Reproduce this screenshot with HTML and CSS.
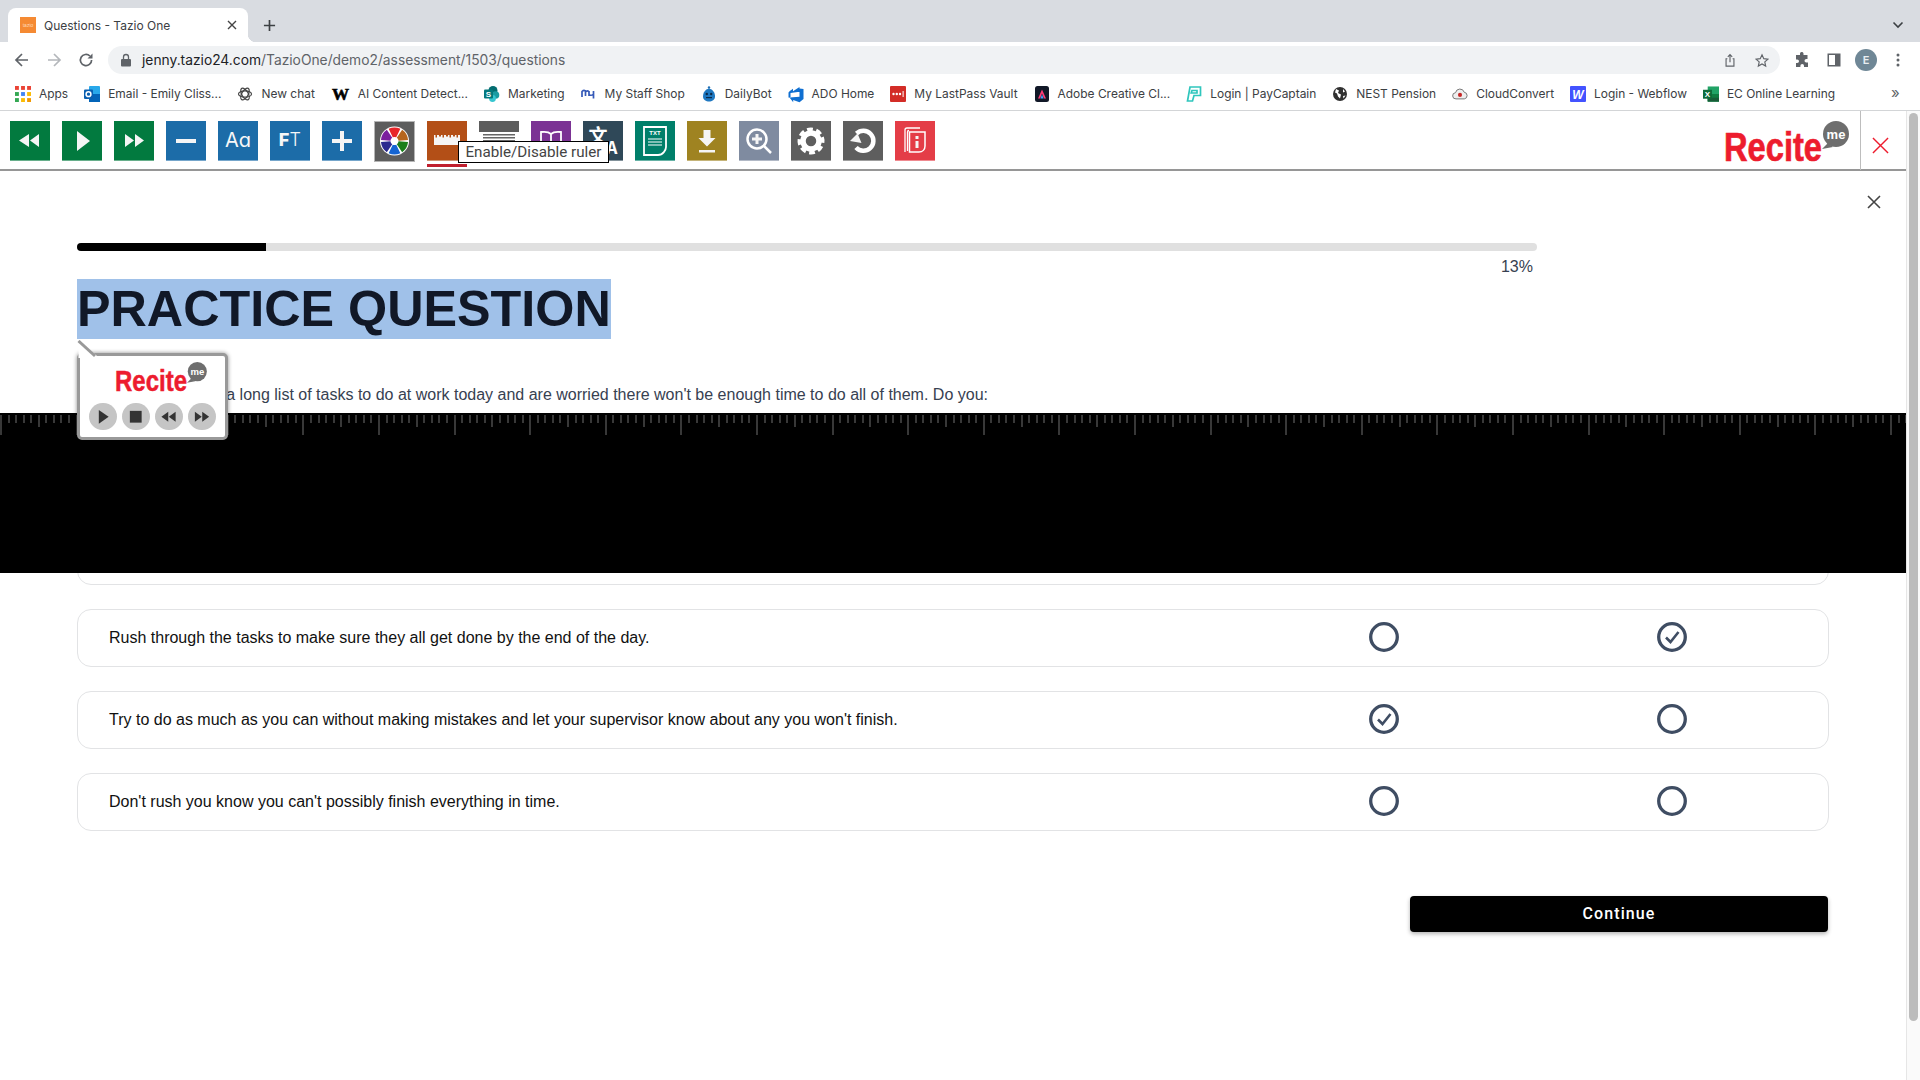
FILE: index.html
```html
<!DOCTYPE html>
<html lang="en">
<head>
<meta charset="utf-8">
<title>Questions - Tazio One</title>
<link rel="stylesheet" href="styles.css">
</head>
<body>
<div class="tabstrip">
  <div class="tab">
    <span class="favicon">tazio</span>
    <span class="tab-title">Questions - Tazio One</span>
    <svg class="tab-x" viewBox="0 0 10 10"><path d="M1 1l8 8M9 1l-8 8"/></svg>
  </div>
  <svg class="newtab" viewBox="0 0 14 14"><path d="M7 1v12M1 7h12"/></svg>
  <svg class="tab-chevron" viewBox="0 0 12 8"><path d="M1.5 1.5L6 6l4.5-4.5"/></svg>
</div>

<div class="navbar">
  <span class="nav-btn"><svg viewBox="0 0 16 16"><path class="ic" d="M14 8H2.5M8 2L2 8l6 6"/></svg></span>
  <span class="nav-btn dim"><svg viewBox="0 0 16 16"><path class="ic" d="M2 8h11.5M8 2l6 6-6 6"/></svg></span>
  <span class="nav-btn"><svg viewBox="0 0 16 16"><path class="ic" d="M13.6 8a5.6 5.6 0 1 1-1.7-4"/><path class="fillic" d="M14.5 1.5v5h-5z"/></svg></span>
  <div class="omnibox">
    <svg class="lock" viewBox="0 0 12 14"><path class="fillic" d="M2 6h8a1 1 0 0 1 1 1v5.500a1 1 0 0 1-1 1H2a1 1 0 0 1-1-1V7a1 1 0 0 1 1-1z"/><path class="ic thin" d="M3.500 6V4a2.500 2.500 0 0 1 5 0v2"/></svg>
    <span class="url"><b>jenny.tazio24.com</b>/TazioOne/demo2/assessment/1503/questions</span>
    <span class="nav-btn small"><svg viewBox="0 0 16 16"><path class="ic thin" d="M5 6H3.500v8.500h9V6H11M8 10V1.500M5.500 3.800L8 1.300l2.500 2.500"/></svg></span>
    <span class="nav-btn small"><svg viewBox="0 0 16 16"><path class="ic thin" d="M8 1.500l2 4.400 4.800.5-3.600 3.200 1 4.700L8 11.900l-4.200 2.400 1-4.700L1.200 6.400 6 5.900z"/></svg></span>
  </div>
  <span class="nav-btn gapped"><svg viewBox="0 0 16 16"><path class="fillic" d="M6 1.500a1.800 1.800 0 0 1 3.500 0V3h4v4h-1.200a1.800 1.800 0 0 0 0 3.600H14V15H10v-1.200a1.800 1.800 0 0 0-3.600 0V15H2v-4h1.200a1.800 1.800 0 0 0 0-3.600H2V3h4z"/></svg></span>
  <span class="nav-btn"><svg viewBox="0 0 16 16"><path class="fillic" d="M1.500 1.500h13v13h-13zM3 3v10h6V3z" fill-rule="evenodd"/></svg></span>
  <span class="nav-btn"><span class="avatar">E</span></span>
  <span class="nav-btn"><svg viewBox="0 0 16 16"><circle class="fillic" cx="8" cy="3" r="1.500"/><circle class="fillic" cx="8" cy="8" r="1.500"/><circle class="fillic" cx="8" cy="13" r="1.500"/></svg></span>
</div>

<div class="bookmarks">
  <span class="bm"><svg viewBox="0 0 14 14"><rect width="3.400" height="3.400" fill="#ea4335"/><rect x="5.300" width="3.400" height="3.400" fill="#ea4335"/><rect x="10.600" width="3.400" height="3.400" fill="#ea4335"/><rect y="5.300" width="3.400" height="3.400" fill="#34a853"/><rect x="5.300" y="5.300" width="3.400" height="3.400" fill="#4285f4"/><rect x="10.600" y="5.300" width="3.400" height="3.400" fill="#fbbc04"/><rect y="10.600" width="3.400" height="3.400" fill="#34a853"/><rect x="5.300" y="10.600" width="3.400" height="3.400" fill="#fbbc04"/><rect x="10.600" y="10.600" width="3.400" height="3.400" fill="#f29900"/></svg>Apps</span>
  <span class="bm"><svg viewBox="0 0 16 16"><rect x="5" y="0" width="11" height="16" rx="1" fill="#28a8ea"/><rect x="5" y="8" width="11" height="8" fill="#0364b8"/><rect y="3.500" width="9" height="9.500" rx="1" fill="#0a5fb0"/><circle cx="4.500" cy="8.200" r="2.400" fill="none" stroke="#fff" stroke-width="1.500"/></svg>Email - Emily Cliss...</span>
  <span class="bm"><svg viewBox="0 0 16 16"><g fill="none" stroke="#444" stroke-width="1.200"><ellipse cx="8" cy="8" rx="6.500" ry="3.200"/><ellipse cx="8" cy="8" rx="6.500" ry="3.200" transform="rotate(60 8 8)"/><ellipse cx="8" cy="8" rx="6.500" ry="3.200" transform="rotate(120 8 8)"/></g></svg>New chat</span>
  <span class="bm wide"><svg viewBox="0 0 20 16"><text class="bm-glyph serif" x="10" y="14" text-anchor="middle" font-size="18" fill="#000" stroke="#000" stroke-width=".6">W</text></svg>AI Content Detect...</span>
  <span class="bm"><svg viewBox="0 0 16 16"><circle cx="9" cy="4.500" r="4.500" fill="#036c70"/><circle cx="11.500" cy="9" r="3.800" fill="#1a9ba1"/><circle cx="8.500" cy="12.500" r="3.400" fill="#37c6d0"/><rect y="3.500" width="9" height="9" rx="1" fill="#03787c"/><text class="bm-glyph" x="4.500" y="11" text-anchor="middle" font-size="8" fill="#fff">S</text></svg>Marketing</span>
  <span class="bm"><svg viewBox="0 0 16 16"><path d="M1 11V5.500c1.500-1.500 3-1.500 3.500 0V10M4.500 6c1-1.500 3-1.500 3.500 0v4M8 5v3.500c1 1 3 1 4 0M12.500 5v7.500" fill="none" stroke="#3559b8" stroke-width="1.700"/></svg>My Staff Shop</span>
  <span class="bm"><svg viewBox="0 0 16 16"><circle cx="8" cy="1.500" r="1.200" fill="#1f6fb5"/><path d="M8 2.500c4 1 6 4 6 8 0 3.500-3 5-6 5s-6-1.500-6-5c0-4 2-7 6-8z" fill="#1f78c1"/><circle cx="5.800" cy="8" r="1.200" fill="#0b2a4a"/><circle cx="10.200" cy="8" r="1.200" fill="#0b2a4a"/><rect x="5" y="11" width="6" height="1.200" fill="#0b2a4a"/></svg>DailyBot</span>
  <span class="bm"><svg viewBox="0 0 16 16"><path d="M15.500 3v10l-4 3.300-6.300-2.300v2.300L1.500 11.500l10-.8V2.500l4 .5zM11.500 1L5 5.300V2.800L1.800 5 .5 6.500v5l2 .5V7l9-1.300z" fill="#0f6fd1"/></svg>ADO Home</span>
  <span class="bm"><svg viewBox="0 0 16 16"><rect width="16" height="16" rx="1" fill="#d32d27"/><circle cx="3.500" cy="8" r="1.200" fill="#fff"/><circle cx="6.800" cy="8" r="1.200" fill="#fff"/><circle cx="10" cy="8" r="1.200" fill="#fff"/><rect x="12.600" y="5" width="1" height="6" fill="#fff"/></svg>My LastPass Vault</span>
  <span class="bm"><svg viewBox="0 0 16 16"><rect x="1" width="14" height="16" rx="2.500" fill="#111827"/><path d="M8 3.500L4 12.500h2L8 7.500l2 5h2z" fill="#ff3d78"/><path d="M6.400 12.500L8 8.500l1.600 4z" fill="#45a6ff"/></svg>Adobe Creative Cl...</span>
  <span class="bm"><svg viewBox="0 0 16 16"><path d="M4 1h10.500v8.500H8L6.500 15H1.500zM6 4.500l-.8 2.500H11V4.500z" fill="none" stroke="#2fc6bd" stroke-width="1.700"/></svg>Login | PayCaptain</span>
  <span class="bm"><svg viewBox="0 0 16 16"><circle cx="8" cy="8" r="7" fill="#303030"/><path d="M4 3l3 1.500-1 2.500 3 1.500-1 4-2-2-1-3-2-1zM11 3l2 2.500-2 1zM11 10l2.500-.5-2 3z" fill="#fff"/></svg>NEST Pension</span>
  <span class="bm"><svg viewBox="0 0 18 16"><path d="M4.500 13.500a3.500 3.500 0 0 1-.5-7 5 5 0 0 1 9.700-.5 3.800 3.800 0 0 1 .2 7.500z" fill="#eee" stroke="#777" stroke-width="1.100"/><circle cx="9" cy="9" r="2.300" fill="#c62828"/></svg>CloudConvert</span>
  <span class="bm"><svg viewBox="0 0 16 16"><rect width="16" height="16" rx="1" fill="#4353ff"/><text class="bm-glyph ital" x="8" y="12.500" text-anchor="middle" font-size="12" fill="#fff">W</text></svg>Login - Webflow</span>
  <span class="bm"><svg viewBox="0 0 17 16"><rect x="5" width="12" height="16" fill="#21a366"/><rect x="5" y="8" width="12" height="8" fill="#107c41"/><rect x="5" y="12" width="12" height="4" fill="#185c37"/><rect y="3.500" width="9.500" height="9.500" fill="#0f6b3a"/><text class="bm-glyph" x="4.800" y="11.300" text-anchor="middle" font-size="8.500" fill="#fff">X</text></svg>EC Online Learning</span>
  <span class="bm-more">»</span>
</div>

<div class="viewport">
  <div class="page">
    <div class="recite-bar">
      <button class="rb green"><svg viewBox="0 0 40 40"><path d="M19 13l-10 6.500L19 26zM29 13l-9 6.500 9 6.500z"/></svg></button>
      <button class="rb green"><svg viewBox="0 0 40 40"><path d="M15 10l13 10-13 10z"/></svg></button>
      <button class="rb green"><svg viewBox="0 0 40 40"><path d="M11 13l9 6.500L11 26zM21 13l9 6.500-9 6.500z"/></svg></button>
      <button class="rb blue"><svg viewBox="0 0 40 40"><rect x="10" y="18" width="20" height="4"/></svg></button>
      <button class="rb blue rb-text"><span class="aa">Aa</span></button>
      <button class="rb blue rb-text"><span class="ft"><b>F</b><i>T</i></span></button>
      <button class="rb blue"><svg viewBox="0 0 40 40"><path d="M18 10h4v8h8v4h-8v8h-4v-8h-8v-4h8z"/></svg></button>
      <button class="rb palette"><svg viewBox="0 0 41 41"><circle cx="20.500" cy="20" r="14.500" fill="#fff"/><g fill="none" stroke-width="9.500"><circle cx="20.500" cy="20" r="8.800" pathLength="60" stroke-dasharray="8.500 51.500" stroke="#e8262a" transform="rotate(-115.500 20.500 20)"/><circle cx="20.500" cy="20" r="8.800" pathLength="60" stroke-dasharray="8.500 51.500" stroke="#b5651d" transform="rotate(-55.500 20.500 20)"/><circle cx="20.500" cy="20" r="8.800" pathLength="60" stroke-dasharray="8.500 51.500" stroke="#1a7f1a" transform="rotate(4.500 20.500 20)"/><circle cx="20.500" cy="20" r="8.800" pathLength="60" stroke-dasharray="8.500 51.500" stroke="#1464d2" transform="rotate(64.500 20.500 20)"/><circle cx="20.500" cy="20" r="8.800" pathLength="60" stroke-dasharray="8.500 51.500" stroke="#2c2a8f" transform="rotate(124.500 20.500 20)"/><circle cx="20.500" cy="20" r="8.800" pathLength="60" stroke-dasharray="8.500 51.500" stroke="#7b1f9e" transform="rotate(184.500 20.500 20)"/></g></svg></button>
      <button class="rb ruler-on"><svg viewBox="0 0 40 40"><path d="M7 14h1.500v2.500H10V14h2v1.500h2V14h1.500v2.500H17V14h2v1.500h2V14h1.500v2.500H24V14h2v1.500h2V14h1.500v2.500H31V14h2v10H7z"/></svg><span class="active-mark"></span></button>
      <button class="rb mask"><svg viewBox="0 0 40 40"><rect width="40" height="11" fill="#5d5d5d"/><rect x="4" y="13" width="32" height="1.500" fill="#666"/><rect x="4" y="16" width="32" height="1.500" fill="#666"/><rect x="4" y="19" width="32" height="1.500" fill="#666"/></svg></button>
      <button class="rb purple"><svg viewBox="0 0 40 40"><path d="M20 13c-2-2-6-2.500-10-2v17c4-.5 8 0 10 2 2-2 6-2.500 10-2V11c-4-.5-8 0-10 2zm0 0v17" fill="none" stroke="#fff" stroke-width="1.800"/></svg></button>
      <button class="rb navy"><svg viewBox="0 0 40 40"><text class="tr-glyph" x="15" y="22" text-anchor="middle" font-size="19" fill="#fff">文</text><text class="tr-glyph" x="29" y="33" text-anchor="middle" font-size="17" fill="#fff">A</text></svg></button>
      <button class="rb teal"><svg viewBox="0 0 40 40"><path d="M9 6h22v20c0 3-3 8-8 8H9z" fill="none" stroke="#fff" stroke-width="1.800"/><text class="txt-glyph" x="20" y="14" text-anchor="middle" font-size="6" fill="#fff">TXT</text><path d="M13 18h14M13 21h14M13 24h14" stroke="#fff" stroke-width="1.200"/></svg></button>
      <button class="rb olive"><svg viewBox="0 0 40 40"><path d="M16.500 9h7v8h5L20 25.500 11.500 17h5zM12 29h16v2.500H12z"/></svg></button>
      <button class="rb slate"><svg viewBox="0 0 40 40"><circle cx="18" cy="18" r="9.500" fill="none" stroke="#fff" stroke-width="2.500"/><path d="M25 25l7 7" stroke="#fff" stroke-width="2.500"/><path d="M16.500 13h3v3.500H23v3h-3.500V23h-3v-3.500H13v-3h3.500z"/></svg></button>
      <button class="rb grey"><svg viewBox="0 0 40 40"><circle cx="20" cy="20" r="8" fill="none" stroke="#fff" stroke-width="5.500"/><circle cx="20" cy="20" r="11.500" fill="none" stroke="#fff" stroke-width="4" pathLength="64" stroke-dasharray="5 3" transform="rotate(-19 20 20)"/></svg></button>
      <button class="rb grey"><svg viewBox="0 0 40 40"><path d="M13.500 12.500a10 10 0 1 1-.5 14" fill="none" stroke="#fff" stroke-width="4.500"/><path d="M7 20l7.500-7.500 4 9.500z"/></svg></button>
      <button class="rb red"><svg viewBox="0 0 40 40"><path d="M10 31V9c0-1.500 1-2 2-2h13M12.500 30V11c0-1 .5-1.500 1.500-1.500" fill="none" stroke="#fff" stroke-width="1.300"/><path d="M14.500 11h15.500v14c0 3.500-2.500 6-6 6h-9.500z" fill="none" stroke="#fff" stroke-width="1.500"/><path d="M20.500 15h3v3h-3zM20.500 20h3v7h-3z"/></svg></button>
      <svg class="logo logo-main" viewBox="0 0 126 42"><text class="logo-word" x="0" y="40" font-size="40" textLength="98" lengthAdjust="spacingAndGlyphs">Recite</text><circle cx="112" cy="13" r="13" fill="#6e6e6e"/><path d="M104 22l-6 6 11-2z" fill="#6e6e6e"/><text class="logo-me" x="112" y="17.500" text-anchor="middle" font-size="13">me</text></svg>
      <div class="recite-close"><svg viewBox="0 0 18 18"><path d="M1 1l16 16M17 1L1 17"/></svg></div>
    </div>

    <main class="main">
      <div class="close-row"><svg viewBox="0 0 14 14"><path d="M1 1l12 12M13 1L1 13"/></svg></div>
      <div class="content">
        <div class="progress-wrap">
          <div class="progress"><div class="progress-fill" style="width:12.95%"></div></div>
          <div class="percent">13%</div>
        </div>
        <h1 class="title"><span>PRACTICE QUESTION</span></h1>
        <p class="question">You've been handed a long list of tasks to do at work today and are worried there won't be enough time to do all of them. Do you:</p>
        <div class="answers">
          <div class="answer"><span></span><span></span><span></span></div>
          <div class="answer">
            <span>Rush through the tasks to make sure they all get done by the end of the day.</span>
            <svg class="radio" viewBox="0 0 30 30"><circle cx="15" cy="15" r="13.300"/></svg>
            <svg class="radio" viewBox="0 0 30 30"><circle cx="15" cy="15" r="13.300"/><path class="check" d="M9 15.500l4.500 4.500 8-10"/></svg>
          </div>
          <div class="answer">
            <span>Try to do as much as you can without making mistakes and let your supervisor know about any you won't finish.</span>
            <svg class="radio" viewBox="0 0 30 30"><circle cx="15" cy="15" r="13.300"/><path class="check" d="M9 15.500l4.500 4.500 8-10"/></svg>
            <svg class="radio" viewBox="0 0 30 30"><circle cx="15" cy="15" r="13.300"/></svg>
          </div>
          <div class="answer">
            <span>Don't rush you know you can't possibly finish everything in time.</span>
            <svg class="radio" viewBox="0 0 30 30"><circle cx="15" cy="15" r="13.300"/></svg>
            <svg class="radio" viewBox="0 0 30 30"><circle cx="15" cy="15" r="13.300"/></svg>
          </div>
        </div>
        <div class="actions"><button class="continue">Continue</button></div>
      </div>
    </main>
  </div>
  <div class="scrollbar"><div class="thumb"></div></div>
</div>

<div class="ruler"></div>
<div class="tooltip">Enable/Disable ruler</div>
<div class="reader">
  <svg class="reader-tail" viewBox="0 0 20 18"><path d="M1.500 0L1.500 18H20V16z" fill="#fff"/><path d="M1.500 1L18 16" fill="none" stroke="#999" stroke-width="3"/></svg>
  <svg class="logo logo-small" viewBox="0 0 126 42"><text class="logo-word" x="0" y="40" font-size="40" textLength="98" lengthAdjust="spacingAndGlyphs">Recite</text><circle cx="112" cy="13" r="13" fill="#6e6e6e"/><path d="M104 22l-6 6 11-2z" fill="#6e6e6e"/><text class="logo-me" x="112" y="17.500" text-anchor="middle" font-size="13">me</text></svg>
  <div class="reader-btns">
    <span class="rbtn"><svg viewBox="0 0 28 28"><path d="M10 7l10 7-10 7z"/></svg></span>
    <span class="rbtn"><svg viewBox="0 0 28 28"><rect x="8" y="8" width="12" height="12"/></svg></span>
    <span class="rbtn"><svg viewBox="0 0 28 28"><path d="M13.500 9l-7 5 7 5zM21 9l-7 5 7 5z"/></svg></span>
    <span class="rbtn"><svg viewBox="0 0 28 28"><path d="M7 9l7 5-7 5zM14.500 9l7 5-7 5z"/></svg></span>
  </div>
</div>
</body>
</html>
```
FILE: styles.css
```css
* { box-sizing: border-box; }
html, body { margin: 0; height: 100%; overflow: hidden; background: #fff; }
body { position: relative; width: 1920px; height: 1080px; font-family: "Liberation Sans", Arial, sans-serif; }

/* browser chrome */
.tabstrip { height: 42px; background: #d9dce1; display: flex; align-items: flex-end; padding-left: 8px; position: relative; }
.tab { position: relative; width: 240px; height: 34px; background: #fff; border-radius: 8px 8px 0 0; display: flex; align-items: center; padding: 0 10px 0 12px; }
.tab::after { content: ""; position: absolute; right: -8px; bottom: 0; width: 8px; height: 8px; background: radial-gradient(circle at 100% 0, transparent 8px, #fff 8.5px); }
.favicon { width: 16px; height: 16px; background: #f58a33; color: #ffd9b8; font: 5px/16px "Liberation Sans", sans-serif; text-align: center; flex: none; }
.tab-title { margin-left: 8px; font: 12px "Inter", sans-serif; color: #3c4043; flex: 1; white-space: nowrap; }
.tab-x { width: 10px; height: 10px; margin-right: 1px; }
.tab-x path { stroke: #444; stroke-width: 1.4; fill: none; }
.newtab { width: 13px; height: 13px; margin: 0 0 10px 15px; }
.newtab path { stroke: #3c4043; stroke-width: 1.8; fill: none; }
.tab-chevron { position: absolute; left: 1892px; top: 21px; width: 12px; height: 8px; }
.tab-chevron path { stroke: #3c4043; stroke-width: 1.6; fill: none; }

.navbar { height: 36px; background: #fff; display: flex; align-items: center; padding: 0 6px; }
.nav-btn { width: 32px; height: 28px; display: flex; align-items: center; justify-content: center; flex: none; }
.nav-btn svg { width: 16px; height: 16px; }
.nav-btn.small svg { width: 14px; height: 15px; }
.nav-btn.gapped { margin-left: 6px; }
.ic { fill: none; stroke: #5f6368; stroke-width: 1.7; }
.ic.thin { stroke-width: 1.300; }
.fillic { fill: #5f6368; }
.dim .ic { stroke: #b4b7bb; }
.omnibox { flex: 1; height: 28px; margin-left: 6px; background: #f0f2f4; border-radius: 14px; display: flex; align-items: center; padding: 0 2px 0 12px; }
.lock { width: 12px; height: 14px; flex: none; }
.url { margin-left: 10px; flex: 1; font: 13.800px "Inter", sans-serif; color: #5f6368; white-space: nowrap; }
.url b { font-weight: 400; color: #202124; }
.avatar { width: 22px; height: 22px; border-radius: 50%; background: #6f8796; color: #e8eef2; font: 600 11px/22px "Inter", sans-serif; text-align: center; }

.bookmarks { height: 33px; background: #fff; border-bottom: 1px solid #d3d5d7; display: flex; align-items: center; padding: 0 0 1px 15px; gap: 16px; position: relative; }
.bm { display: flex; align-items: center; gap: 8px; font: 11.950px "Inter", sans-serif; color: #3c4043; white-space: nowrap; }
.bm svg { width: 16px; height: 16px; flex: none; overflow: visible; }
.bm.wide svg { width: 19px; }
.bm-glyph { font-family: "Liberation Sans", sans-serif; font-weight: 700; }
.bm-glyph.serif { font-family: "Liberation Serif", serif; }
.bm-glyph.ital { font-style: italic; }
.bm-more { position: absolute; left: 1891px; top: 5px; font: 15px "Inter", sans-serif; color: #5f6368; }

/* page */
.viewport { height: 969px; display: flex; }
.page { width: 1906px; display: flex; flex-direction: column; }
.scrollbar { width: 14px; background: #fafafa; border-left: 1px solid #e6e6e6; padding: 2px 2px 0 2px; }
.thumb { width: 9px; height: 908px; border-radius: 5px; background: #bcbcbc; }

.recite-bar { height: 60px; border-bottom: 2px solid #969696; display: flex; gap: 12px; padding: 10px 0 0 10px; position: relative; flex: none; }
.rb { width: 40px; height: 40px; padding: 0; border: 0; border-bottom: 1px solid rgba(255,255,255,.4); position: relative; flex: none; display: block; }
.rb svg { width: 40px; height: 40px; display: block; fill: #f5f5f5; }
.green { background: #027a3f; }
.blue { background: #1c6ca8; }
.palette { width: 41px; height: 41px; background: #5d5d5d; border: 1px solid #b5b5b5; }
.palette svg { margin: -1px; width: 41px; height: 41px; }
.ruler-on { background: #b34f17; }
.active-mark { position: absolute; left: 0; top: 43px; width: 40px; height: 3px; background: #c01f2e; }
.mask { background: #fff; border: 0; }
.purple { background: #7b3294; }
.navy { background: #2f4858; }
.teal { background: #007f6a; }
.olive { background: #9f8321; }
.slate { background: #7f8ba0; }
.grey { background: #5e5e5e; }
.red { background: #e43d47; }
.rb-text { color: #f7f7f7; text-align: center; line-height: 38px; }
.aa { font: 400 20px/38px "Inter", sans-serif; font-feature-settings: "cv11"; }
.ft { font: 400 18px/38px "Inter", sans-serif; letter-spacing: .3px; }
.ft b { font-weight: 800; }
.ft i { font-style: normal; font-weight: 300; }
.tr-glyph { font-family: "Noto Sans CJK SC", "Liberation Sans", sans-serif; font-weight: 700; }
.txt-glyph { font-family: "Liberation Sans", sans-serif; font-weight: 700; }

.logo { display: block; flex: none; overflow: visible; }
.logo-main { width: 126px; height: 42px; margin-left: auto; margin-right: 10px; }
.logo-word { font-family: "Liberation Sans", sans-serif; font-weight: 700; fill: #ed1c2e; stroke: #ed1c2e; stroke-width: .7px; }
.logo-me { font-family: "Liberation Sans", sans-serif; font-weight: 700; fill: #fff; }
.recite-close { width: 46px; height: 59px; margin-top: -10px; padding: 9px 7px 0 0; border-left: 1px solid #bdbdbd; display: flex; align-items: center; justify-content: center; margin-left: -12px; }
.recite-close svg { width: 17px; height: 17px; }
.recite-close path { stroke: #ed1c2e; stroke-width: 1.500; fill: none; }

.main { flex: 1; }
.close-row { height: 72px; display: flex; justify-content: flex-end; padding: 24px 25px 0 0; }
.close-row svg { width: 14px; height: 14px; }
.close-row path { stroke: #444; stroke-width: 1.600; fill: none; }
.content { padding: 0 77px; }
.progress-wrap { width: 1460px; }
.progress { height: 8px; background: #e0e0e0; border-radius: 4px; overflow: hidden; }
.progress-fill { height: 8px; background: #000; }
.percent { margin-top: 4px; padding-right: 4px; text-align: right; font-size: 16px; line-height: 24px; color: #374151; }
.title { margin: 0; font-size: 50.300px; line-height: 60px; font-weight: 700; color: #111827; }
.title span { display: inline-block; background: #a0c1e9; }
.question { margin: 44px 0 0; font-size: 16px; line-height: 24px; color: #374151; }
.answers { margin-top: 120px; display: flex; flex-direction: column; gap: 24px; }
.answer { height: 58px; border: 1px solid #e2e3e5; border-radius: 14px; display: grid; grid-template-columns: 1fr 288px 288px; align-items: center; padding: 0 12px 0 31px; font-size: 16px; color: #111; }
.radio { width: 30px; height: 30px; justify-self: center; margin-top: -2px; }
.radio circle { fill: none; stroke: #3f4d63; stroke-width: 3.300; }
.check { fill: none; stroke: #3f4d63; stroke-width: 2.600; }
.actions { margin-top: 65px; display: flex; justify-content: flex-end; padding-right: 1px; }
.continue { width: 418px; height: 36px; border: 0; border-radius: 4px; padding: 0 0 2px; background: #000; color: #fff; font: 500 16px "Roboto", sans-serif; letter-spacing: 1.100px; box-shadow: 0 2px 4px rgba(0,0,0,.3); }

/* overlays */
.ruler { position: absolute; left: 0; top: 413px; width: 1906px; height: 160px; background-color: #000; background-repeat: no-repeat;
  background-image:
    repeating-linear-gradient(90deg, #383838 0 2px, transparent 2px 7.56px),
    repeating-linear-gradient(90deg, #383838 0 2px, transparent 2px 37.8px),
    repeating-linear-gradient(90deg, #383838 0 2px, transparent 2px 75.6px);
  background-size: 100% 8px, 100% 12px, 100% 20px;
  background-position: 0 2px, 0 2px, 0 2px; }
.tooltip { position: absolute; left: 458px; top: 141px; width: 151px; height: 22px; background: #fff; border: 1px solid #000; font: 15.200px/21.500px "Roboto", sans-serif; color: #444; text-align: center; white-space: nowrap; }
.reader { position: absolute; left: 77px; top: 353px; width: 151px; height: 87px; background: #fff; border: 3.500px solid #999; border-radius: 5px; box-shadow: 0 0 4px rgba(0,0,0,.45); display: flex; flex-direction: column; align-items: flex-start; }
.reader-tail { position: absolute; left: -3.500px; top: -16px; width: 20px; height: 18px; }
.logo-small { width: 92.600px; height: 31px; margin: 5.500px 0 0 35px; }
.reader-btns { display: flex; gap: 5.500px; margin: 10px 0 0 9px; }
.rbtn { width: 27.500px; height: 27.500px; border-radius: 50%; background: #c5c5c5; display: block; }
.rbtn svg { width: 27.500px; height: 27.500px; display: block; fill: #333; }
```
